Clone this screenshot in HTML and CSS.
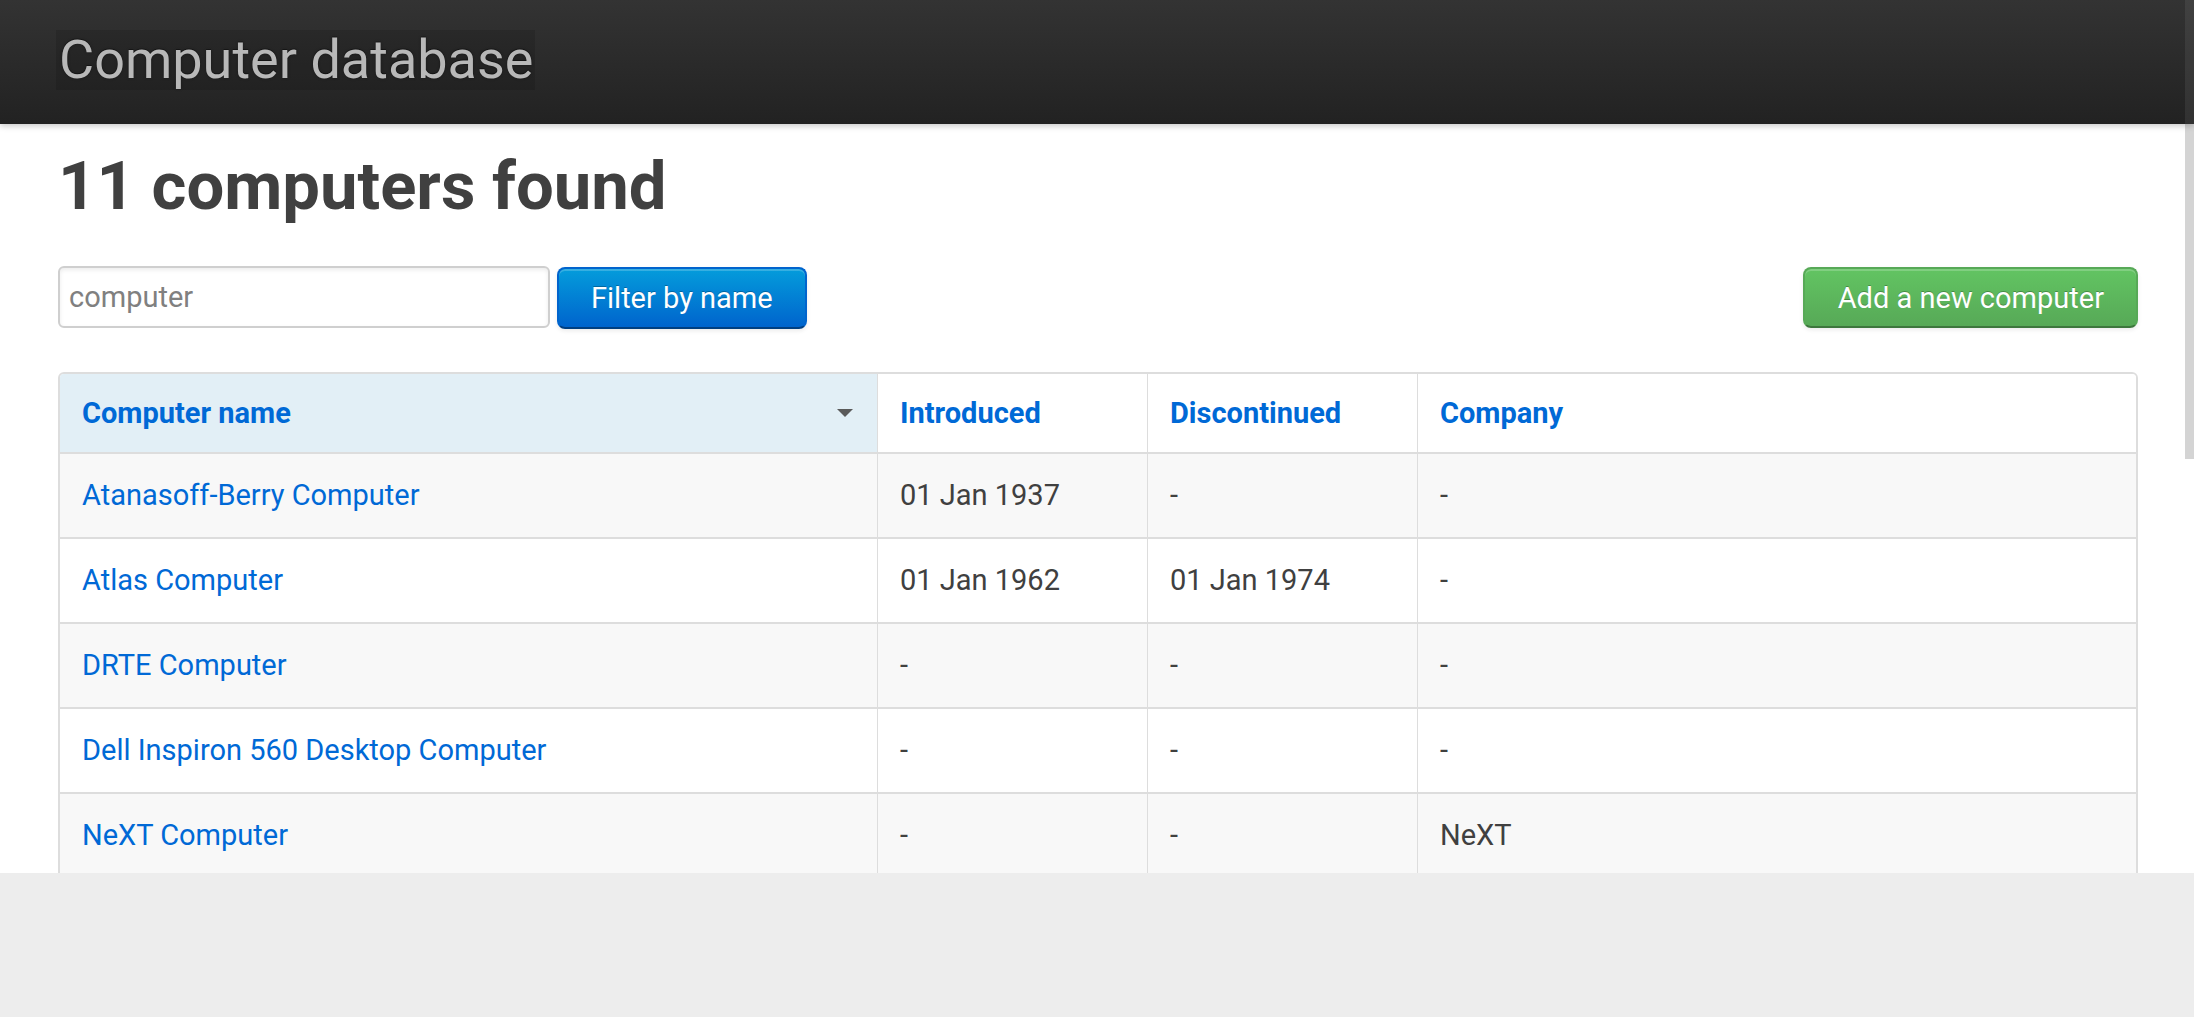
FILE: index.html
```html
<!DOCTYPE html>
<html lang="en">
<head>
<meta charset="utf-8">
<title>Computers database</title>
<link rel="stylesheet" href="styles.css">
</head>
<body>
<div class="frame">
  <header class="topbar">
    <div class="topbar-inner">
      <a class="brand" href="#">Computer database</a>
    </div>
    <span class="gutter"></span>
  </header>
  <div class="viewport">
    <div class="scroller">
      <section class="main">
        <h1 class="title">11 computers found</h1>

        <div class="actions">
          <form class="filter">
            <input class="search" type="search" value="computer" placeholder="Filter by computer name...">
            <button class="btn btn-primary" type="button">Filter by name</button>
          </form>
          <a class="btn btn-success add" href="#">Add a new computer</a>
        </div>

        <table class="computers">
          <thead>
            <tr>
              <th class="c1 sorted"><span class="caret"></span><a href="#">Computer name</a></th>
              <th class="c2"><a href="#">Introduced</a></th>
              <th class="c3"><a href="#">Discontinued</a></th>
              <th class="c4"><a href="#">Company</a></th>
            </tr>
          </thead>
          <tbody>
            <tr><td><a href="#">Atanasoff-Berry Computer</a></td><td>01 Jan 1937</td><td>-</td><td>-</td></tr>
            <tr><td><a href="#">Atlas Computer</a></td><td>01 Jan 1962</td><td>01 Jan 1974</td><td>-</td></tr>
            <tr><td><a href="#">DRTE Computer</a></td><td>-</td><td>-</td><td>-</td></tr>
            <tr><td><a href="#">Dell Inspiron 560 Desktop Computer</a></td><td>-</td><td>-</td><td>-</td></tr>
            <tr><td><a href="#">NeXT Computer</a></td><td>-</td><td>-</td><td>NeXT</td></tr>
          </tbody>
        </table>
      </section>
    </div>
    <div class="scrollbar"><div class="thumb"></div></div>
  </div>
</div>
</body>
</html>
```

FILE: styles.css
```css
* { box-sizing: border-box; }

html, body {
  margin: 0;
  padding: 0;
}

body {
  background: #ededed;
  font-family: Roboto, "Liberation Sans", Arial, sans-serif;
  font-size: 29px;
  color: #404040;
}

a { color: #0069d6; text-decoration: none; }

.frame {
  height: 873px;
  display: flex;
  flex-direction: column;
  background: #ffffff;
}

/* ---------- top bar ---------- */
.topbar {
  position: relative;
  z-index: 2;
  height: 124px;
  flex: none;
  display: flex;
  background: linear-gradient(#333333, #222222);
  box-shadow: 0 2px 6px rgba(0, 0, 0, 0.22);
}

.topbar-inner {
  flex: 1;
  padding: 30px 0 0 56px;
}

.gutter {
  width: 9px;
  flex: none;
  background: rgba(255, 255, 255, 0.07);
}

.brand {
  display: inline-block;
  height: 60px;
  line-height: 60px;
  padding: 0 2px 0 3px;
  font-size: 54px;
  font-weight: 400;
  color: #b8b8b8;
  background: rgba(0, 0, 0, 0.12);
  text-shadow: 0 -1px 0 rgba(0, 0, 0, 0.35), 0 0 3px rgba(0, 0, 0, 0.35);
}

/* ---------- scroll area ---------- */
.viewport {
  flex: 1;
  min-height: 0;
  display: flex;
}

.scroller {
  flex: 1;
  min-width: 0;
  overflow: hidden;
  background: #ffffff;
}

.scrollbar {
  width: 9px;
  flex: none;
  background: #ffffff;
}

.thumb {
  height: 335px;
  background: #d4d4d4;
}

.main {
  padding: 22px 47px 0 58px;
}

.title {
  margin: 0 0 40px;
  font-size: 67px;
  line-height: 80px;
  font-weight: 700;
  color: #404040;
}

/* ---------- actions ---------- */
.actions {
  display: flex;
  align-items: flex-start;
  margin-bottom: 43px;
}

.filter {
  display: flex;
  gap: 7px;
  margin: 0;
}

.search {
  width: 492px;
  height: 62px;
  padding: 0 9px;
  border: 2px solid #cfcfcf;
  border-radius: 6px;
  box-shadow: inset 0 2px 4px rgba(0, 0, 0, 0.08);
  font-family: Roboto, "Liberation Sans", Arial, sans-serif;
  font-size: 29px;
  color: #808080;
  background: #ffffff;
  outline: none;
}

.btn {
  display: inline-flex;
  align-items: center;
  height: 62px;
  padding: 0 32px;
  border: 2px solid;
  border-radius: 8px;
  font-family: Roboto, "Liberation Sans", Arial, sans-serif;
  font-size: 29px;
  line-height: 36px;
  color: #ffffff;
  text-shadow: 0 -1px 0 rgba(0, 0, 0, 0.25);
  box-shadow: inset 0 2px 0 rgba(255, 255, 255, 0.2), 0 2px 4px rgba(0, 0, 0, 0.08);
  cursor: pointer;
}

.btn-primary {
  margin-top: 1px;
  background: linear-gradient(#049cdb, #0064cd);
  border-color: #0064cd #0064cd #003f81;
}

.btn-success {
  margin-left: auto;
  margin-top: 1px;
  height: 61px;
  padding: 0 32px 0 33px;
  background: linear-gradient(#62c462, #57a957);
  border-color: #57a957 #57a957 #3d773d;
}

/* ---------- table ---------- */
.computers {
  width: 100%;
  table-layout: fixed;
  border-collapse: separate;
  border-spacing: 0;
  border: 2px solid #dddddd;
  border-radius: 6px;
}

.computers th,
.computers td {
  padding: 23px 22px 24px;
  line-height: 36px;
  text-align: left;
  vertical-align: middle;
  border-left: 1px solid #dddddd;
  white-space: nowrap;
}

.computers th:first-child,
.computers td:first-child { border-left: 0; }

.computers th {
  padding: 21px 24px 21px 22px;
  font-weight: 700;
  border-bottom: 2px solid #dddddd;
  background: #ffffff;
}

.computers th:first-child { border-top-left-radius: 4px; }
.computers th:last-child { border-top-right-radius: 4px; }

.computers .c1 { width: 817px; }
.computers .c2 { width: 270px; }
.computers .c3 { width: 270px; }

.computers th.sorted { background: #e2eff6; }

.caret {
  float: right;
  width: 0;
  height: 0;
  margin-top: 14px;
  border-left: 8px solid transparent;
  border-right: 8px solid transparent;
  border-top: 8px solid #5a5a5a;
}

.computers tbody tr + tr td { border-top: 2px solid #dddddd; }

.computers tbody tr:nth-child(odd) td { background: #f8f8f8; }
```
